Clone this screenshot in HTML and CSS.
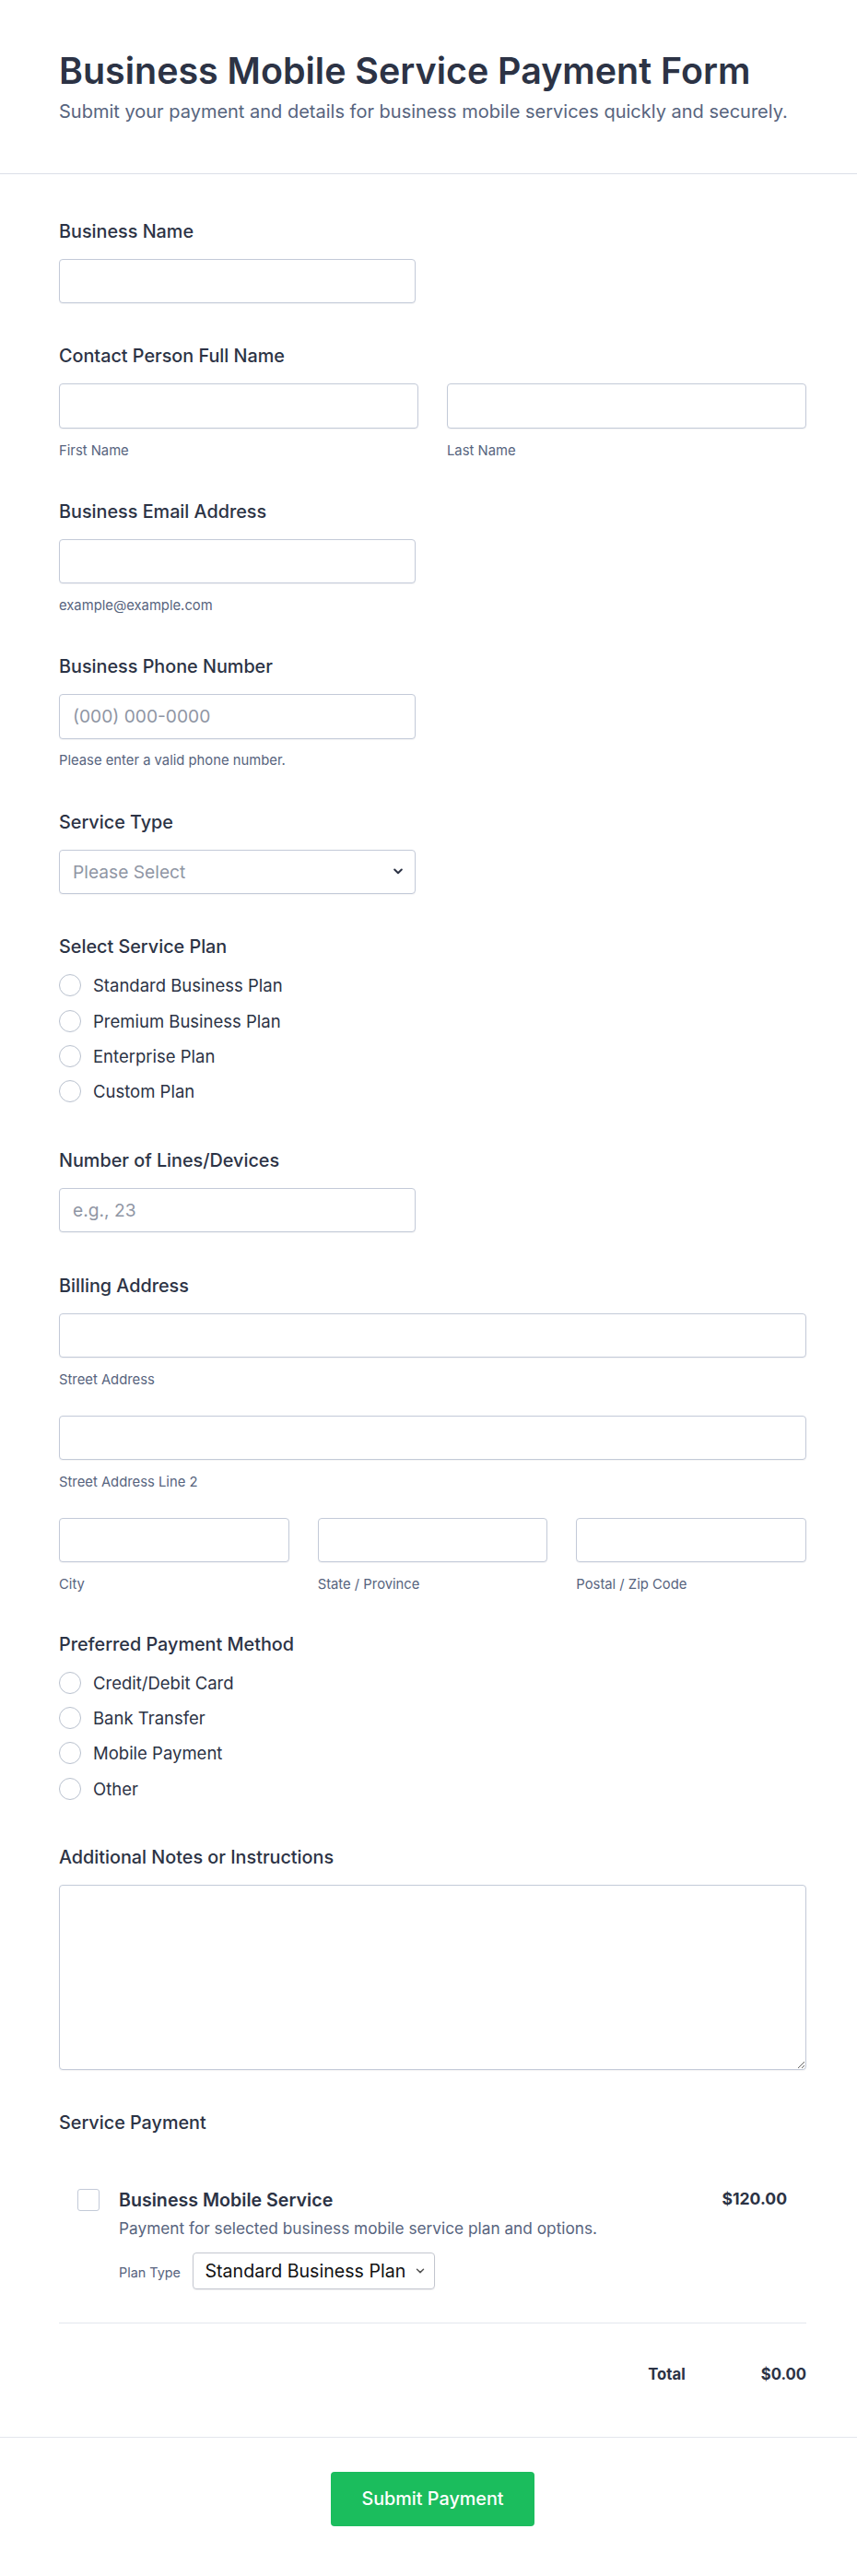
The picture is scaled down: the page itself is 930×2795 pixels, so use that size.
FILE: index.html
```html
<!DOCTYPE html>
<html lang="en">
<head>
<meta charset="utf-8">
<title>Business Mobile Service Payment Form</title>
<link rel="stylesheet" href="styles.css">
</head>
<body>
<header class="form-header">
  <h1 class="form-title">Business Mobile Service Payment Form</h1>
  <p class="form-subtitle">Submit your payment and details for business mobile services quickly and securely.</p>
</header>

<main class="form-body">
  <div class="field">
    <label class="field-label">Business Name</label>
    <input class="input input-half" type="text">
  </div>

  <div class="field">
    <label class="field-label">Contact Person Full Name</label>
    <div class="grid grid-2">
      <div class="col"><input class="input" type="text"><span class="sublabel">First Name</span></div>
      <div class="col"><input class="input" type="text"><span class="sublabel">Last Name</span></div>
    </div>
  </div>

  <div class="field">
    <label class="field-label">Business Email Address</label>
    <input class="input input-half" type="email">
    <span class="sublabel">example@example.com</span>
  </div>

  <div class="field">
    <label class="field-label">Business Phone Number</label>
    <input class="input input-half" type="tel" placeholder="(000) 000-0000">
    <span class="sublabel">Please enter a valid phone number.</span>
  </div>

  <div class="field">
    <label class="field-label">Service Type</label>
    <div class="select input-half">
      <span class="select-placeholder">Please Select</span>
      <svg class="select-chevron" width="10" height="7" viewBox="0 0 10 7"><polyline points="1.2,1.5 5,5.2 8.8,1.5" fill="none" stroke="#2c3345" stroke-width="2" stroke-linecap="round" stroke-linejoin="round"/></svg>
    </div>
  </div>

  <div class="field field-radio">
    <label class="field-label">Select Service Plan</label>
    <div class="radio-list">
      <div class="radio-item"><span class="radio"></span><span class="radio-text">Standard Business Plan</span></div>
      <div class="radio-item"><span class="radio"></span><span class="radio-text">Premium Business Plan</span></div>
      <div class="radio-item"><span class="radio"></span><span class="radio-text">Enterprise Plan</span></div>
      <div class="radio-item"><span class="radio"></span><span class="radio-text">Custom Plan</span></div>
    </div>
  </div>

  <div class="field">
    <label class="field-label">Number of Lines/Devices</label>
    <input class="input input-half" type="text" placeholder="e.g., 23">
  </div>

  <div class="field field-address">
    <label class="field-label">Billing Address</label>
    <div class="addr-row">
      <input class="input" type="text"><span class="sublabel">Street Address</span>
    </div>
    <div class="addr-row">
      <input class="input" type="text"><span class="sublabel">Street Address Line 2</span>
    </div>
    <div class="grid grid-3">
      <div class="col"><input class="input" type="text"><span class="sublabel">City</span></div>
      <div class="col"><input class="input" type="text"><span class="sublabel">State / Province</span></div>
      <div class="col"><input class="input" type="text"><span class="sublabel">Postal / Zip Code</span></div>
    </div>
  </div>

  <div class="field field-radio">
    <label class="field-label">Preferred Payment Method</label>
    <div class="radio-list">
      <div class="radio-item"><span class="radio"></span><span class="radio-text">Credit/Debit Card</span></div>
      <div class="radio-item"><span class="radio"></span><span class="radio-text">Bank Transfer</span></div>
      <div class="radio-item"><span class="radio"></span><span class="radio-text">Mobile Payment</span></div>
      <div class="radio-item"><span class="radio"></span><span class="radio-text">Other</span></div>
    </div>
  </div>

  <div class="field">
    <label class="field-label">Additional Notes or Instructions</label>
    <textarea class="textarea"></textarea>
  </div>

  <div class="field field-last">
    <label class="field-label">Service Payment</label>
    <div class="product">
      <span class="checkbox"></span>
      <div class="product-info">
        <div class="product-name">Business Mobile Service</div>
        <div class="product-desc">Payment for selected business mobile service plan and options.</div>
        <div class="product-option">
          <span class="option-label">Plan Type</span>
          <div class="option-select">
            <span class="option-value">Standard Business Plan</span>
            <svg class="option-chevron" width="10" height="6" viewBox="0 0 10 6"><polyline points="1.5,1.2 5,4.6 8.5,1.2" fill="none" stroke="#555" stroke-width="1.5" stroke-linecap="round" stroke-linejoin="round"/></svg>
          </div>
        </div>
      </div>
      <div class="product-price">$120.00</div>
    </div>
    <div class="total-row">
      <span class="total-label">Total</span>
      <span class="total-value">$0.00</span>
    </div>
  </div>
</main>

<footer class="form-footer">
  <button class="submit-btn" type="button">Submit Payment</button>
</footer>
</body>
</html>
```

FILE: styles.css
```css
* {
  box-sizing: border-box;
}

html, body {
  margin: 0;
  padding: 0;
  background: #ffffff;
}

body {
  font-family: Inter, "Noto Sans", "Liberation Sans", sans-serif;
  color: #2c3345;
}

.form-header {
  padding: 52.7px 55px 53.47px 64px;
  border-bottom: 1px solid #dcdfe8;
}

.form-title {
  margin: 0;
  font-size: 39.4px;
  line-height: 48px;
  font-weight: 600;
  color: #2c3345;
}

.form-subtitle {
  margin: 6.84px 0 0;
  font-size: 20px;
  line-height: 27px;
  font-weight: 400;
  color: #57647e;
}

.form-body {
  padding: 48.61px 55px 54.17px 64px;
}

.field {
  margin-bottom: 44.3px;
}

.field-address {
  margin-bottom: 42.8px;
}

.field-radio {
  margin-bottom: 49.5px;
}

.field-last {
  margin-bottom: 0;
}

.field-label {
  display: block;
  font-size: 19.8px;
  line-height: 27px;
  font-weight: 500;
  color: #2c3345;
  margin-bottom: 16px;
}

.input,
.select,
.textarea {
  display: block;
  width: 100%;
  height: 48.5px;
  border: 1px solid #c3cad8;
  border-radius: 4px;
  background: #fff;
  font-family: Inter, "Noto Sans", "Liberation Sans", sans-serif;
  font-size: 19.2px;
  color: #2c3345;
  padding: 0 14px;
  margin: 0;
  outline: none;
  box-shadow: 0 1px 1px rgba(60, 70, 90, 0.06);
}

.input::placeholder {
  color: #8f96a4;
}

.input-half {
  width: 387px;
}

.select {
  display: flex;
  align-items: center;
  justify-content: space-between;
  padding: 0 13px 0 14px;
}

.select-placeholder {
  color: #8f96a4;
  font-size: 19.2px;
  line-height: 24px;
}

.select-chevron {
  display: block;
}

.textarea {
  height: 200.7px;
  padding: 12px 14px;
  resize: vertical;
}

.sublabel {
  display: block;
  font-size: 14.8px;
  line-height: 18px;
  margin-top: 14.62px;
  color: #57647e;
}

.grid {
  display: grid;
  column-gap: 31px;
}

.grid-2 {
  grid-template-columns: 1fr 1fr;
}

.grid-3 {
  grid-template-columns: 1fr 1fr 1fr;
}

.addr-row {
  margin-bottom: 30px;
}

.radio-list {
  display: flex;
  flex-direction: column;
  gap: 14.33px;
  margin-top: 1.89px;
}

.radio-item {
  display: flex;
  align-items: center;
  height: 24px;
}

.radio {
  width: 24px;
  height: 24px;
  border: 1px solid #b9c1ce;
  border-radius: 50%;
  background: #fff;
  flex: none;
}

.radio-text {
  margin-left: 13px;
  font-size: 18.5px;
  line-height: 24px;
  color: #2c3345;
}

.product {
  display: flex;
  align-items: flex-start;
  gap: 21px;
  padding: 41.06px 21px 35.7px 20px;
  border-bottom: 1px solid #e3e7ee;
}

.checkbox {
  width: 24px;
  height: 24px;
  border: 1px solid #c3cad8;
  border-radius: 3px;
  background: #fff;
  flex: none;
  margin-top: 0.9px;
}

.product-info {
  flex: 1;
  min-width: 0;
}

.product-name {
  font-size: 19.64px;
  line-height: 27px;
  font-weight: 600;
  color: #2c3345;
}

.product-desc {
  margin-top: 4.66px;
  font-size: 17.25px;
  line-height: 24px;
  color: #57647e;
}

.product-option {
  display: flex;
  align-items: baseline;
  gap: 13px;
  margin-top: 13.67px;
}

.option-label {
  font-size: 14.4px;
  line-height: 18px;
  color: #57647e;
}

.option-select {
  width: 263px;
  height: 40.6px;
  border: 1px solid #c3c6cf;
  border-radius: 4px;
  display: flex;
  align-items: center;
  justify-content: space-between;
  padding: 0 9.6px 0 12.5px;
  box-shadow: 0 1px 1px rgba(60, 70, 90, 0.08);
}

.option-value {
  font-size: 19.6px;
  line-height: 24px;
  color: #111;
  white-space: nowrap;
}

.option-chevron {
  display: block;
  flex: none;
}

.product-price {
  font-size: 17.6px;
  line-height: 24px;
  font-weight: 700;
  color: #2c3345;
}

.total-row {
  display: flex;
  justify-content: flex-end;
  gap: 82px;
  margin-top: 42.13px;
  font-size: 16.7px;
  line-height: 27px;
  font-weight: 700;
  color: #2c3345;
}

.form-footer {
  border-top: 1px solid #e3e6ed;
  padding: 36.7px 55px 50px 64px;
  text-align: center;
}

.submit-btn {
  height: 59px;
  padding: 0 33.4px;
  border: none;
  border-radius: 4px;
  background: #1bbd5d;
  color: #fff;
  font-family: Inter, "Noto Sans", "Liberation Sans", sans-serif;
  font-size: 19.8px;
  font-weight: 500;
  cursor: pointer;
}
```
